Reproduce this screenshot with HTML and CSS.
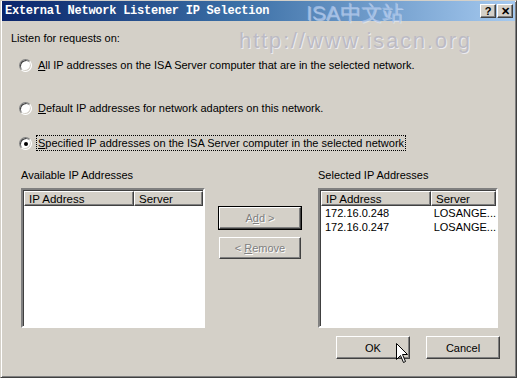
FILE: index.html
```html
<!DOCTYPE html>
<html>
<head>
    <title>External Network Listener IP Selection</title>
    <link rel="stylesheet" href="styles.css">
</head>
<body>
    <div class="dialog">
        <div class="titlebar">
            <span class="title">External Network Listener IP Selection</span>
            <div class="caption-btns">
                <span class="cbtn">?</span>
                <span class="cbtn">&#10005;</span>
            </div>
        </div>

        <div class="content">
            <div class="intro">Listen for requests on:</div>

            <label class="option opt-all"><span class="radio"></span><span><u>A</u>ll IP addresses on the ISA Server computer that are in the selected network.</span></label>
            <label class="option opt-default"><span class="radio"></span><span><u>D</u>efault IP addresses for network adapters on this network.</span></label>
            <label class="option opt-specified"><span class="radio checked"></span><span class="focus"><u>S</u>pecified IP addresses on the ISA Server computer in the selected network</span></label>

            <div class="lists">
                <div class="col col-left">
                    <div class="col-label">Available IP Addresses</div>
                    <div class="listview">
                        <div class="lv-head">
                            <span class="lv-col1">IP Address</span>
                            <span class="lv-col2">Server</span>
                        </div>
                    </div>
                </div>

                <div class="mid">
                    <button class="btn default" disabled>A<u>d</u>d &gt;</button>
                    <button class="btn" disabled>&lt; <u>R</u>emove</button>
                </div>

                <div class="col col-right">
                    <div class="col-label">Selected IP Addresses</div>
                    <div class="listview">
                        <div class="lv-head">
                            <span class="lv-col1">IP Address</span>
                            <span class="lv-col2">Server</span>
                        </div>
                        <div class="lv-row">
                            <span class="lv-col1">172.16.0.248</span>
                            <span class="lv-col2">LOSANGE...</span>
                        </div>
                        <div class="lv-row">
                            <span class="lv-col1">172.16.0.247</span>
                            <span class="lv-col2">LOSANGE...</span>
                        </div>
                    </div>
                </div>
            </div>

            <div class="footer">
                <button class="btn">OK</button>
                <button class="btn">Cancel</button>
            </div>
        </div>

        <!-- watermark stamped over the screenshot -->
        <div class="wm-title">ISA中文站</div>
        <div class="wm-url">http://www.isacn.org</div>

        <svg class="cursor" width="13" height="21" viewBox="0 0 13 21">
            <path d="M0.5 0.5 L0.5 16.5 L4.5 12.5 L7.5 19.5 L9.5 18.5 L6.5 11.5 L11.5 11.5 Z" fill="#fff" stroke="#000" stroke-width="1"/>
        </svg>
    </div>
</body>
</html>
```

FILE: styles.css
```css
:root {
    --face: #D4D0C8;
    --shadow: #808080;
    --dark: #404040;
    --light: #ffffff;
}

html, body {
    margin: 0;
    padding: 0;
}

body {
    font-family: "Liberation Sans", Arial, sans-serif;
    font-size: 11px;
    color: #000;
}

.dialog {
    position: relative;
    width: 517px;
    height: 378px;
    box-sizing: border-box;
    background-color: var(--face);
    border: 1px solid;
    border-color: var(--face) var(--dark) var(--dark) var(--face);
    box-shadow: inset 1px 1px var(--light), inset -1px -1px var(--shadow);
    overflow: hidden;
}

.titlebar {
    height: 20px;
    margin: 0 1px;
    padding: 0 2px 0 3px;
    display: flex;
    align-items: center;
    background: linear-gradient(to right, #0A246A, #3A6EA5 45%, #A6CAF0);
}

.title {
    flex: 1;
    font-family: "Liberation Mono", monospace;
    font-weight: bold;
    font-size: 12px;
    letter-spacing: -0.25px;
    color: #fff;
}

.caption-btns {
    display: flex;
    gap: 1px;
}

.cbtn {
    width: 14px;
    height: 12px;
    display: flex;
    align-items: center;
    justify-content: center;
    background-color: var(--face);
    border: 1px solid;
    border-color: var(--light) var(--dark) var(--dark) var(--light);
    box-shadow: inset -1px -1px var(--shadow);
    font-weight: bold;
    font-size: 11px;
    line-height: 1;
}

.content {
    padding: 10px 0 0 10px;
}

.intro {
    line-height: 14px;
}

.option {
    display: flex;
    align-items: center;
    gap: 6px;
    height: 14px;
    padding-left: 8px;
}

.opt-all { margin-top: 13px; }
.opt-default { margin-top: 29px; }
.opt-specified { margin-top: 21px; }

.radio {
    position: relative;
    width: 11px;
    height: 11px;
    border-radius: 50%;
    background-color: #fff;
    border: 1px solid;
    border-color: var(--shadow) var(--light) var(--light) var(--shadow);
    box-shadow: inset 1px 1px var(--dark), inset -1px -1px var(--face);
}

.radio.checked::after {
    content: "";
    position: absolute;
    left: 4px;
    top: 4px;
    width: 4px;
    height: 4px;
    border-radius: 50%;
    background-color: #000;
}

.focus {
    outline: 1px dotted #000;
    outline-offset: 1px;
}

.lists {
    display: flex;
    margin-top: 18px;
    padding-left: 10px;
}

.col-left { width: 184px; }
.col-right { width: 180px; margin-left: 17px; }

.col-label {
    line-height: 14px;
    margin-bottom: 6px;
}

.listview {
    height: 136px;
    background-color: #fff;
    border: 2px solid;
    border-color: var(--shadow) var(--light) var(--light) var(--shadow);
    box-shadow: inset 1px 1px var(--dark);
    font-size: 11px;
}

.lv-head {
    display: flex;
    margin: 1px 0 0 1px;
}

.lv-head span {
    height: 15px;
    line-height: 15px;
    padding-left: 4px;
    box-sizing: border-box;
    background-color: var(--face);
    border: 1px solid;
    border-color: var(--light) var(--dark) var(--dark) var(--light);
    box-shadow: inset -1px -1px var(--shadow);
    font-size: 11.5px;
}

.lv-col1 { width: 110px; }
.lv-col2 { flex: 1; }

.lv-row {
    display: flex;
    line-height: 14px;
    padding-left: 5px;
}

.lv-row .lv-col1 { width: 109px; }

.mid {
    width: 82px;
    margin: 39px 0 0 14px;
    display: flex;
    flex-direction: column;
    gap: 8px;
}

.btn {
    height: 22px;
    padding: 0;
    font-family: inherit;
    font-size: 11px;
    color: #000;
    background-color: var(--face);
    border: 1px solid;
    border-color: var(--light) var(--dark) var(--dark) var(--light);
    box-shadow: inset -1px -1px var(--shadow);
    border-radius: 0;
}

.btn:disabled {
    color: var(--shadow);
    text-shadow: 1px 1px var(--light);
}

.btn.default {
    outline: 1px solid #000;
}

.footer {
    display: flex;
    justify-content: flex-end;
    gap: 16px;
    margin-top: 8px;
    padding-right: 16px;
}

.footer .btn {
    width: 74px;
    height: 23px;
}

.wm-title {
    position: absolute;
    left: 305px;
    top: -2px;
    font-size: 21px;
    color: rgba(170, 195, 235, 0.75);
    text-shadow: 1px 1px rgba(230, 240, 255, 0.5);
}

.wm-url {
    position: absolute;
    left: 238px;
    top: 27px;
    font-size: 22px;
    letter-spacing: 1.8px;
    color: #bcbbc4;
    text-shadow: 1px 1px #ecebf0;
}

.cursor {
    position: absolute;
    left: 395px;
    top: 342px;
}
```
